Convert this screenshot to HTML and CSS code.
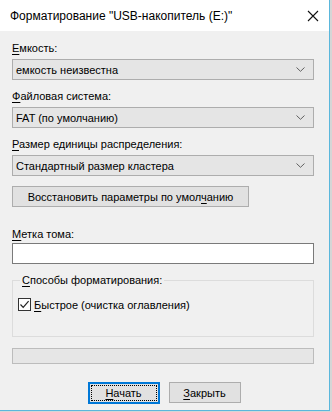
FILE: index.html
```html
<!DOCTYPE html>
<html lang="ru">
<head>
<meta charset="utf-8">
<title>Форматирование</title>
<link rel="stylesheet" href="styles.css">
</head>
<body>
<div class="window">
  <div class="titlebar">
    <span class="title">Форматирование "USB-накопитель (E:)"</span>
    <svg class="close" width="12" height="12" viewBox="0 0 12 12"><path d="M1 1 L11 11 M11 1 L1 11" stroke="#111" stroke-width="1.1" fill="none"/></svg>
  </div>
  <div class="content">
    <div class="field">
      <div class="label"><u>Е</u>мкость:</div>
      <div class="combo"><span>емкость неизвестна</span><svg class="chev" width="9" height="5" viewBox="0 0 9 5"><path d="M0.5 0.5 L4.5 4.3 L8.5 0.5" stroke="#606060" fill="none" stroke-width="1"/></svg></div>
    </div>
    <div class="field">
      <div class="label"><u>Ф</u>айловая система:</div>
      <div class="combo"><span>FAT (по умолчанию)</span><svg class="chev" width="9" height="5" viewBox="0 0 9 5"><path d="M0.5 0.5 L4.5 4.3 L8.5 0.5" stroke="#606060" fill="none" stroke-width="1"/></svg></div>
    </div>
    <div class="field">
      <div class="label"><u>Р</u>азмер единицы распределения:</div>
      <div class="combo"><span>Стандартный размер кластера</span><svg class="chev" width="9" height="5" viewBox="0 0 9 5"><path d="M0.5 0.5 L4.5 4.3 L8.5 0.5" stroke="#606060" fill="none" stroke-width="1"/></svg></div>
    </div>
    <div class="btn restore"><span>Восстановить параметры по умол<u>ч</u>анию</span></div>
    <div class="label vol"><u>М</u>етка тома:</div>
    <div class="input"></div>
    <div class="group">
      <div class="legend"><u>С</u>пособы форматирования:</div>
      <div class="check-row">
        <span class="checkbox"><svg width="11" height="11" viewBox="0 0 11 11"><path d="M1.5 5.5 L4.2 8.3 L9.6 2.2" stroke="#222" stroke-width="1.2" fill="none"/></svg></span>
        <span class="check-label"><u>Б</u>ыстрое (очистка оглавления)</span>
      </div>
    </div>
    <div class="progress"></div>
    <div class="buttons">
      <div class="btn primary"><span class="focus"><span><u>Н</u>ачать</span></span></div>
      <div class="btn"><span><u>З</u>акрыть</span></div>
    </div>
  </div>
</div>
</body>
</html>
```
FILE: styles.css
```css
html, body {
  margin: 0;
  padding: 0;
  background: #d6d6d6;
}
body {
  width: 332px;
  height: 412px;
  overflow: hidden;
  font-family: "Liberation Sans", Arial, sans-serif;
  font-size: 11px;
  color: #000;
}
.window {
  width: 329px;
  height: 410px;
  background: #f0f0f0;
  border-right: 1px solid #5ab7dc;
  border-bottom: 1px solid #5ab7dc;
  display: flex;
  flex-direction: column;
}
.titlebar {
  height: 31px;
  background: #fff;
  display: flex;
  align-items: center;
  justify-content: space-between;
  padding: 0 10px 0 10px;
  flex-shrink: 0;
}
.title {
  font-size: 12px;
  color: #000;
}
.close {
  display: block;
}
.content {
  padding: 9px 15px 0 12px;
  display: flex;
  flex-direction: column;
}
u {
  text-decoration: underline;
  text-underline-offset: 2px;
  text-decoration-thickness: 1px;
}
.field {
  display: flex;
  flex-direction: column;
  margin-bottom: 8px;
}
.label {
  line-height: 16px;
  height: 16px;
  margin-bottom: 3px;
}
.combo {
  height: 21px;
  box-sizing: border-box;
  border: 1px solid #adadad;
  background: #e5e5e5;
  display: flex;
  align-items: center;
  justify-content: space-between;
  padding: 0 8px 0 3px;
}
.chev {
  display: block;
}
.btn {
  box-sizing: border-box;
  height: 21px;
  border: 1px solid #adadad;
  background: #e1e1e1;
  display: flex;
  align-items: center;
  justify-content: center;
  white-space: nowrap;
}
.restore {
  width: 237px;
  margin-top: 2px;
}
.vol {
  margin-top: 19px;
  margin-bottom: 1px;
}
.input {
  height: 21px;
  box-sizing: border-box;
  border: 1px solid #7a7a7a;
  background: #fff;
}
.group {
  margin-top: 16px;
  height: 57px;
  box-sizing: border-box;
  border: 1px solid #dcdcdc;
  position: relative;
  padding: 17px 0 0 5px;
}
.legend {
  position: absolute;
  top: -9px;
  left: 7px;
  background: #f0f0f0;
  padding: 0 2px;
  line-height: 16px;
}
.check-row {
  display: flex;
  align-items: center;
}
.checkbox {
  width: 13px;
  height: 13px;
  box-sizing: border-box;
  border: 1px solid #333;
  background: #fff;
  display: flex;
  align-items: center;
  justify-content: center;
  margin-right: 3px;
}
.checkbox svg {
  display: block;
}
.progress {
  margin-top: 11px;
  height: 16px;
  box-sizing: border-box;
  border: 1px solid #bcbcbc;
  background: #e6e6e6;
}
.buttons {
  margin-top: 18px;
  display: flex;
  justify-content: center;
  gap: 9px;
  padding-left: 2px;
}
.buttons .btn {
  width: 72px;
  height: 21px;
}
.btn.primary {
  border: 2px solid #0078d7;
  padding: 1px;
  height: 22px;
}
.focus {
  flex: 1;
  align-self: stretch;
  border: 1px dotted #000;
  display: flex;
  align-items: center;
  justify-content: center;
}
```
